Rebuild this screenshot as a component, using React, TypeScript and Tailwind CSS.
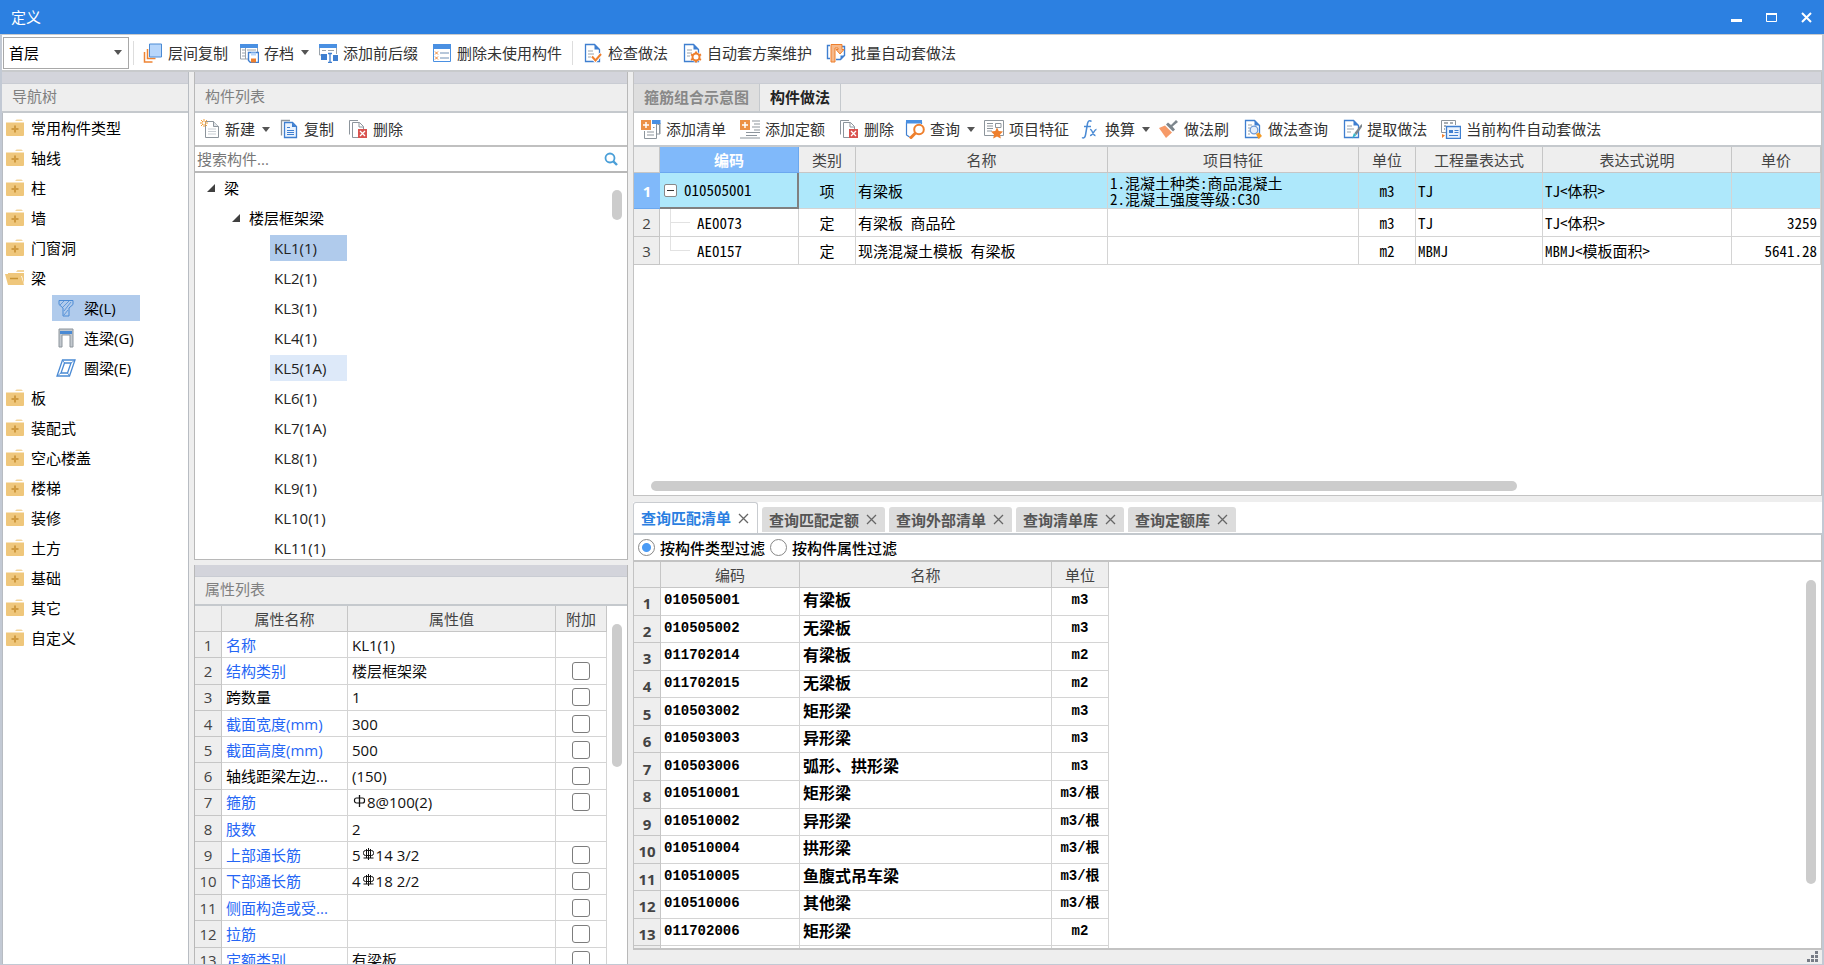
import { ReactNode, useState } from "react";

// Navigation tree schema
const navSchema = [
  { name: "常用构件类型" },
  { name: "轴线" },
  { name: "柱" },
  { name: "墙" },
  { name: "门窗洞" },
  { name: "梁", open: true },
  { name: "板" },
  { name: "装配式" },
  { name: "空心楼盖" },
  { name: "楼梯" },
  { name: "装修" },
  { name: "土方" },
  { name: "基础" },
  { name: "其它" },
  { name: "自定义" },
];

const beamKinds = [
  { name: "梁(L)", icon: <BeamIcon /> },
  { name: "连梁(G)", icon: <LinkBeamIcon /> },
  { name: "圈梁(E)", icon: <RingBeamIcon /> },
];

const components = [
  "KL1(1)",
  "KL2(1)",
  "KL3(1)",
  "KL4(1)",
  "KL5(1A)",
  "KL6(1)",
  "KL7(1A)",
  "KL8(1)",
  "KL9(1)",
  "KL10(1)",
  "KL11(1)",
];

interface Property {
  name: string;
  value: ReactNode;
  blue: boolean;
  extra: boolean;
}

const properties: Property[] = [
  { name: "名称", value: "KL1(1)", blue: true, extra: false },
  { name: "结构类别", value: "楼层框架梁", blue: true, extra: true },
  { name: "跨数量", value: "1", blue: false, extra: true },
  { name: "截面宽度(mm)", value: "300", blue: true, extra: true },
  { name: "截面高度(mm)", value: "500", blue: true, extra: true },
  { name: "轴线距梁左边...", value: "(150)", blue: false, extra: true },
  { name: "箍筋", value: <><Rebar bars={1} />8@100(2)</>, blue: true, extra: true },
  { name: "肢数", value: "2", blue: true, extra: false },
  { name: "上部通长筋", value: <>5<Rebar bars={3} />14 3/2</>, blue: true, extra: true },
  { name: "下部通长筋", value: <>4<Rebar bars={3} />18 2/2</>, blue: true, extra: true },
  { name: "侧面构造或受...", value: "", blue: true, extra: true },
  { name: "拉筋", value: "", blue: true, extra: true },
  { name: "定额类别", value: "有梁板", blue: true, extra: true },
];

const methods = [
  { code: "AE0073", kind: "定", name: "有梁板 商品砼", unit: "m3", expr: "TJ", note: "TJ<体积>", price: "3259" },
  { code: "AE0157", kind: "定", name: "现浇混凝土模板 有梁板", unit: "m2", expr: "MBMJ", note: "MBMJ<模板面积>", price: "5641.28" },
];

const matches = [
  { code: "010505001", name: "有梁板", unit: "m3" },
  { code: "010505002", name: "无梁板", unit: "m3" },
  { code: "011702014", name: "有梁板", unit: "m2" },
  { code: "011702015", name: "无梁板", unit: "m2" },
  { code: "010503002", name: "矩形梁", unit: "m3" },
  { code: "010503003", name: "异形梁", unit: "m3" },
  { code: "010503006", name: "弧形、拱形梁", unit: "m3" },
  { code: "010510001", name: "矩形梁", unit: "m3/根" },
  { code: "010510002", name: "异形梁", unit: "m3/根" },
  { code: "010510004", name: "拱形梁", unit: "m3/根" },
  { code: "010510005", name: "鱼腹式吊车梁", unit: "m3/根" },
  { code: "010510006", name: "其他梁", unit: "m3/根" },
  { code: "011702006", name: "矩形梁", unit: "m2" },
];

const queryTabs = ["查询匹配清单", "查询匹配定额", "查询外部清单", "查询清单库", "查询定额库"];

/* ---------- Icons ---------- */

function Icon({ children }: { children: ReactNode }) {
  return (
    <svg width="20" height="20" viewBox="0 0 20 20" fill="none" className="shrink-0" aria-hidden="true">
      {children}
    </svg>
  );
}

function FolderIcon({ open = false }: { open?: boolean }) {
  return open ? (
    <svg width="20" height="18" viewBox="0 0 20 18" className="-ml-px mr-[-1px] shrink-0" aria-hidden="true">
      <path d="M11 3l1.500-2H19v2z" fill="#f3d59c" />
      <path d="M3 4h16v11l-2-8H3z" fill="#efc77c" />
      <path d="M0 5h15.5L19 16H3z" fill="#efc77c" />
      <path d="M5 9.500h8" stroke="#c99434" strokeWidth="1.500" />
    </svg>
  ) : (
    <svg width="18" height="18" viewBox="0 0 18 18" className="shrink-0" aria-hidden="true">
      <path d="M9 2l1.500-1.500h5L17 2z" fill="#f3d59c" />
      <path d="M0 3.500h18V16a1 1 0 0 1-1 1H1a1 1 0 0 1-1-1z" fill="#efc77c" />
      <path d="M5.500 10h7M9 6.500v7" stroke="#cf9a40" strokeWidth="2" />
    </svg>
  );
}

function BeamIcon() {
  return (
    <svg width="16" height="18" viewBox="0 0 16 18" fill="none" stroke="#4a8ad4" aria-hidden="true">
      <path d="M1 1.500h14v4L11 9v8H5V9L1 5.500z" />
      <path d="M2 6l4-4M5 8l6-6M6 12l7-9M6 16l4-5" strokeWidth=".8" />
    </svg>
  );
}

function LinkBeamIcon() {
  return (
    <svg width="16" height="20" viewBox="0 0 16 20" fill="none" aria-hidden="true">
      <path d="M1 1v18h3V7h8v12h3V1z" fill="#c3c9cf" stroke="#8d959c" />
      <path d="M2 3h12v3H2z" fill="#4a8ad4" />
    </svg>
  );
}

function RingBeamIcon() {
  return (
    <svg width="20" height="18" viewBox="0 0 20 18" fill="none" stroke="#4a8ad4" strokeWidth="1.300" aria-hidden="true">
      <path d="M6.500 1H19l-5.500 16H1z" />
      <path d="M8.500 4h6.500l-3.500 10H5z" />
      <path d="M6.500 1l2 3M15 4l4-3M11.500 14l2 3M5 14l-4 3" strokeWidth=".8" />
    </svg>
  );
}

const LayerCopyIcon = () => (
  <Icon>
    <path d="M1.500 9v10h8M4.500 6v9.500h8" stroke="#ee8434" strokeWidth="1.500" />
    <path d="M6.500 1h12v13h-12z" fill="#b7d6fb" stroke="#4a8ad4" />
  </Icon>
);

const ArchiveIcon = () => (
  <Icon>
    <path d="M1.500 1.500h17v8M1.500 2v14H9" stroke="#9aa3ab" />
    <path d="M1 1h18v4H1z" fill="#4a90e2" />
    <path d="M3 7h3M8 7h9M3 10h3M3 13h3M6.500 5v11" stroke="#9aa3ab" />
    <path d="M9.500 9.500h10v10h-8l-2-2z" fill="#fff" stroke="#3f7fd0" strokeWidth="1.400" />
    <path d="M12 9.500h5v3h-5z" fill="#b7d6fb" />
    <path d="M12 15.500h5v4h-5z" fill="#ee7f2d" />
  </Icon>
);

const AffixIcon = () => (
  <Icon>
    <path d="M1.500 2v10H6M18.500 2v9" stroke="#9aa3ab" />
    <path d="M1 1h18v4H1z" fill="#4a90e2" />
    <path d="M4 7.500h4M10 7.500h6" stroke="#9aa3ab" />
    <path d="M3 11h6v6H3zM15 12h5v6h-5z" fill="#3f7fd0" />
    <path d="M10 10.500h4M12 10.500v9M10 19.500h4" stroke="#3f7fd0" strokeWidth="1.300" />
  </Icon>
);

const UnusedIcon = () => (
  <Icon>
    <path d="M1.500 2v16.500h17V2" stroke="#4a90e2" />
    <path d="M1 1h18v5H1z" fill="#4a90e2" />
    <path d="M3 8.500l3 3M6 8.500l-3 3M3 13.500l3 3M6 13.500l-3 3" stroke="#ee8434" />
    <path d="M8 10h9M8 15h9" stroke="#6e8fb5" />
  </Icon>
);

const Sheet = () => (
  <>
    <path d="M2.500 1.500h9l5 5v12h-14z" fill="#fff" stroke="#3f7fd0" strokeWidth="1.300" />
    <path d="M11.500 1l5.500 5.500h-5.500z" fill="#3f7fd0" />
  </>
);

const CheckIcon = () => (
  <Icon>
    <Sheet />
    <path d="M5 8h5M5 11h6M5 14h3" stroke="#9aa3ab" />
    <path d="M9 13.500l3.500 4L18 11" stroke="#fff" strokeWidth="4" />
    <path d="M9 13.500l3.500 4L18 11" stroke="#ee7f2d" strokeWidth="2" />
  </Icon>
);

const PlanIcon = () => (
  <Icon>
    <Sheet />
    <path d="M5 7h5M5 10h5M5 13h3" stroke="#9aa3ab" />
    <circle cx="14" cy="14" r="5" fill="#fff" />
    <circle cx="14" cy="14" r="3.500" stroke="#ee7f2d" strokeWidth="2" />
    <path d="M14 8.500v2M14 17.500v2M9 11.300l1.800 1M17.200 15.800l1.800 1M9 16.800l1.800-1M17.200 12.300l1.800-1" stroke="#ee7f2d" strokeWidth="2" />
  </Icon>
);

const BatchIcon = () => (
  <Icon>
    <path d="M4 2.500H1.500v13H4M13 3.500h5.500v9l-4 4H10" stroke="#3f7fd0" strokeWidth="1.400" />
    <path d="M18.500 12.500h-4v4z" fill="#3f7fd0" />
    <path d="M5 1.500h11v5h2l-4 4.500-4-4.500h2V5H9v14H5z" fill="#f6b98a" stroke="#ee7f2d" />
  </Icon>
);

const NewIcon = () => (
  <Icon>
    <path d="M5.500 2.500h8l5 5v11h-13z" fill="#fff" stroke="#8d959c" />
    <path d="M13.500 2.500v5h5" fill="#dfe3e7" stroke="#8d959c" />
    <path d="M8 10h8M8 12.500h8M8 15h8" stroke="#c9ced3" />
    <path d="M1 1l6 6M7 1L1 7M4 0v8M0 4h8" stroke="#f5a13a" />
    <circle cx="4" cy="4" r="1.200" fill="#fff" />
  </Icon>
);

const CopyIcon = () => (
  <Icon>
    <path d="M11 1.500H2.500v15" stroke="#8d959c" strokeWidth="1.300" />
    <path d="M5.500 3.500h8l4 4v11h-12z" fill="#eaf3fe" stroke="#3f7fd0" strokeWidth="1.300" />
    <path d="M13 3.500v4.500h4.500z" fill="#3f7fd0" />
    <path d="M8 8.500h3M8 11.500h7M8 13.500h7M8 15.500h7" stroke="#3f7fd0" />
  </Icon>
);

const DeleteIcon = () => (
  <Icon>
    <path d="M10 1.500H1.500v14" stroke="#8d959c" />
    <path d="M4.500 3.500h7l4 4v11h-11z" fill="#fff" stroke="#8d959c" />
    <path d="M11 3.500v4.500h4.500" stroke="#8d959c" />
    <path d="M10 10h9v9h-9z" fill="#d9534f" />
    <path d="M12 12l5 5M17 12l-5 5" stroke="#fff" strokeWidth="1.300" />
  </Icon>
);

const PlusBadge = () => (
  <>
    <path d="M0 1h10v10H0z" fill="#ec9146" />
    <path d="M5 3v6M2 6h6" stroke="#fff" strokeWidth="1.500" />
  </>
);

const AddListIcon = () => (
  <Icon>
    <path d="M19 4v11h-3M3.500 12v7.500h12V5" stroke="#8d959c" />
    <path d="M11 1h8.500v4H11z" fill="#4a90e2" />
    <path d="M12 8.500h1.500M6 13h7M6 16h7M16.500 5.500h2v9" stroke="#8d959c" />
    <PlusBadge />
  </Icon>
);

const AddQuotaIcon = () => (
  <Icon>
    <path d="M12 2h8M14 5h6M12 8h8M14 11h6M6 13.500h14M6 16.500h11M0 19h20" stroke="#8d959c" strokeWidth="1.200" />
    <PlusBadge />
  </Icon>
);

const QueryIcon = () => (
  <Icon>
    <path d="M1.500 3v13l3 2M16.500 3v2" stroke="#3f7fd0" strokeWidth="1.200" />
    <path d="M1 1h16v3.500H1z" fill="#4a90e2" />
    <circle cx="14" cy="10.500" r="4.800" fill="#fff" stroke="#ee7f2d" strokeWidth="2" />
    <path d="M10.500 14L5 19.500" stroke="#ee7f2d" strokeWidth="3" />
  </Icon>
);

const FeatureIcon = () => (
  <Icon>
    <path d="M.5 1.500h19v15H.5z" fill="#fff" stroke="#8d959c" />
    <path d="M3 4.500h6M3 7h6M3 9.500h6M3 12h5M11.500 4.500h5.500v4h-5.500z" stroke="#8d959c" />
    <path d="M13 8.500l1.700 3.500 4.300.6-3 2.900.8 4-3.800-2-3.800 2 .8-4-3-2.900 4.300-.6z" fill="#ee7f2d" />
  </Icon>
);

const FxIcon = () => (
  <Icon>
    <path d="M11.500 2.500c-1.800-1.800-3.500-.5-4 2L5.500 16c-.5 2.800-2 3.500-3.500 2.500M4 7.500h7" stroke="#4a8ad4" strokeWidth="1.500" />
    <path d="M10 10.500c2.500-1 2.500 6.500 5.500 6M16.500 10.500c-2-.5-4 6.500-6.500 6" stroke="#4a8ad4" strokeWidth="1.400" />
  </Icon>
);

const BrushIcon = () => (
  <Icon>
    <path d="M0 9l6-2.500 7 7L7 19z" fill="#f69a68" />
    <path d="M7 5.500l7 7 2-2-2.500-3L19 3l-2-2-5 5-3-2.500z" fill="#7d868d" />
  </Icon>
);

const MethodQueryIcon = () => (
  <Icon>
    <Sheet />
    <path d="M5 6h4M5 9h2M5 12h2M5 15h2" stroke="#9aa3ab" />
    <circle cx="11" cy="11" r="3.800" fill="#e4eefb" stroke="#6e9bd6" strokeWidth="1.300" />
    <path d="M13 15l3-1.500 3 3.500-3.500 3z" fill="#f59a23" />
  </Icon>
);

const ExtractIcon = () => (
  <Icon>
    <Sheet />
    <path d="M5 7h5M5 10h7M5 13h4" stroke="#9aa3ab" />
    <path d="M19.500 5l-7 9 2 2 6-9z" fill="#7d868d" />
    <path d="M12 14l2.500 2-4.500 3.500z" fill="#35b6c9" />
  </Icon>
);

const AutoIcon = () => (
  <Icon>
    <path d="M5 13.500H.5v-12h14V6" stroke="#8d959c" />
    <path d="M3 4h4M9 4h3M3 7h2M3 10h1" stroke="#8d959c" strokeWidth="1.500" />
    <path d="M5.500 7.500h14v12h-14z" fill="#eaf3fe" stroke="#3f7fd0" strokeWidth="1.300" />
    <path d="M8 11h4v3H8z" fill="#3f7fd0" />
    <path d="M13.500 11.500h4M13.500 13.500h4M8 16.500h9" stroke="#3f7fd0" />
    <path d="M1 15l3 1.500-3 2.500z" fill="#ee7f2d" />
  </Icon>
);

// Steel grade mark drawn ahead of a bar diameter
function Rebar({ bars }: { bars: number }) {
  return (
    <svg width="15" height="12" viewBox="0 0 15 12" fill="none" stroke="#111" className="mb-[6px] inline-block" role="img" aria-label="钢筋">
      {bars === 1 ? (
        <>
          <rect x="2.500" y="3" width="10" height="5" rx="2" strokeWidth="1.200" />
          <path d="M7.500 0v12" strokeWidth="1.300" />
        </>
      ) : (
        <>
          <rect x="2.500" y="2.500" width="10" height="5" rx="2" />
          <path d="M7.500 0v12M5.500 1v9M9.500 1v9M2.500 10h10" />
        </>
      )}
    </svg>
  );
}

/* ---------- Shared pieces ---------- */

function Caret() {
  return (
    <svg width="8" height="5" viewBox="0 0 8 5" className="ml-0.5 shrink-0" aria-hidden="true">
      <path d="M0 0h8L4 5z" fill="#555" />
    </svg>
  );
}

interface ToolButtonProps {
  icon: ReactNode;
  label: string;
  menu?: boolean;
}

function ToolButton({ icon, label, menu = false }: ToolButtonProps) {
  return (
    <button
      type="button"
      className={`flex h-[26px] shrink-0 items-center gap-[5px] rounded-sm whitespace-nowrap text-[#333] hover:bg-[#e8f1fc] ${
        menu ? "pl-0.5" : "px-[5px]"
      }`}
    >
      {icon}
      <span>{label}</span>
      {menu && <Caret />}
    </button>
  );
}

function PanelTitle({ title }: { title: string }) {
  return (
    <div className="shrink-0">
      <div className="h-[12px] border-b border-[#c9ccd3] bg-[#d3d4db]" />
      <h2 className="h-[29px] border-b-2 border-[#c5c9cd] bg-[#eee] pl-[10px] leading-[25px] text-[#808080]">{title}</h2>
    </div>
  );
}

function ExpandArrow() {
  return (
    <svg width="8" height="8" viewBox="0 0 8 8" className="shrink-0" aria-hidden="true">
      <path d="M8 0v8H0z" fill="#404040" />
    </svg>
  );
}

const headCell = "border-r border-b border-[#c6c6c6] bg-[#eee] font-normal text-[#444]";
const bodyCell = "border-r border-b border-[#d4d4d4]";
const song = "font-['Noto_Sans_Mono_CJK_SC','Noto_Sans_CJK_SC',monospace]";

/* ---------- Panels ---------- */

function NavPanel() {
  return (
    <nav className="flex w-[187px] shrink-0 flex-col border-r border-[#b8bcc2] bg-white">
      <PanelTitle title="导航树" />
      <ul className="flex-1 overflow-hidden border-l border-[#b8bcc2] text-black">
        {navSchema.map((item) => (
          <li key={item.name}>
            <div className="flex h-[30px] items-center gap-[7px] pl-[3px]">
              <FolderIcon open={item.open} />
              <span>{item.name}</span>
            </div>
            {item.open && (
              <ul>
                {beamKinds.map((kind, i) => (
                  <li key={kind.name} className="flex h-[30px] items-center pl-[49px]">
                    <div className={`flex h-[26px] w-[88px] items-center gap-[7px] pl-[3px] ${i === 0 ? "bg-[#b0cbec]" : ""}`}>
                      <span className="flex w-[22px] justify-center">{kind.icon}</span>
                      <span>{kind.name}</span>
                    </div>
                  </li>
                ))}
              </ul>
            )}
          </li>
        ))}
      </ul>
    </nav>
  );
}

function ComponentPanel() {
  const [active, setActive] = useState<string>("KL1(1)");

  return (
    <section className="flex h-[488px] shrink-0 flex-col border-x border-b border-[#b8b8b8] bg-white">
      <PanelTitle title="构件列表" />
      <div className="flex h-[34px] shrink-0 items-center gap-1 border-b-2 border-[#c0c0c0] pl-[3px]">
        <ToolButton icon={<NewIcon />} label="新建" menu />
        <ToolButton icon={<CopyIcon />} label="复制" />
        <ToolButton icon={<DeleteIcon />} label="删除" />
      </div>
      <div className="flex h-[26px] shrink-0 items-center border-b-2 border-[#b8b8b8] pr-[9px] pl-0.5">
        <input
          type="text"
          aria-label="搜索构件"
          placeholder="搜索构件..."
          className="min-w-0 flex-1 outline-none placeholder:text-[#777]"
        />
        <svg width="14" height="14" viewBox="0 0 14 14" fill="none" stroke="#4a9fd8" aria-hidden="true">
          <circle cx="6" cy="6" r="4.500" strokeWidth="1.800" />
          <path d="M9 9l4 4" strokeWidth="2.400" />
        </svg>
      </div>
      <div className="flex min-h-0 flex-1 text-[#222]">
        <div className="flex-1 overflow-hidden">
          <div className="flex h-[30px] items-center gap-[9px] pl-[12px] text-black">
            <ExpandArrow />
            梁
          </div>
          <div className="flex h-[30px] items-center gap-[9px] pl-[37px] text-black">
            <ExpandArrow />
            楼层框架梁
          </div>
          <ul>
            {components.map((name) => (
              <li key={name} className="flex h-[30px] items-center pl-[75px]">
                <button
                  type="button"
                  onClick={() => setActive(name)}
                  className={`h-[26px] w-[77px] pl-1 text-left ${
                    active === name ? "bg-[#b0cbec]" : name === "KL5(1A)" ? "bg-[#dde9f9]" : ""
                  }`}
                >
                  {name}
                </button>
              </li>
            ))}
          </ul>
        </div>
        <div className="w-[15px] pt-[17px]">
          <div className="h-[30px] w-[10px] rounded-full bg-[#ccc]" />
        </div>
      </div>
    </section>
  );
}

function PropertyPanel() {
  return (
    <section className="flex min-h-0 flex-1 flex-col border-x border-[#b8b8b8] bg-white">
      <PanelTitle title="属性列表" />
      <div className="flex min-h-0 flex-1 overflow-hidden">
        <div className="min-w-0 flex-1">
          <table className="h-[368px] w-full table-fixed border-separate border-spacing-0">
            <colgroup>
              <col className="w-[27px]" />
              <col className="w-[126px]" />
              <col />
              <col className="w-[51px]" />
            </colgroup>
            <thead>
              <tr className="h-[26px]">
                <th className={headCell} />
                <th className={headCell}>属性名称</th>
                <th className={headCell}>属性值</th>
                <th className={headCell}>附加</th>
              </tr>
            </thead>
            <tbody>
              {properties.map((prop, i) => (
                <tr key={prop.name} className="h-[26px] leading-[24px]">
                  <td className={`${headCell} text-center`}>{i + 1}</td>
                  <td className={`${bodyCell} pl-1 whitespace-nowrap ${prop.blue ? "text-[#2566f5]" : "text-black"}`}>{prop.name}</td>
                  <td className={`${bodyCell} pl-1 text-[#111]`}>{prop.value}</td>
                  <td className={bodyCell}>
                    {prop.extra && (
                      <input
                        type="checkbox"
                        aria-label={`${prop.name} 附加`}
                        className="mx-auto block size-[18px] appearance-none rounded-[3px] border border-[#7d7d7d] bg-white checked:bg-[#4a90e2]"
                      />
                    )}
                  </td>
                </tr>
              ))}
            </tbody>
          </table>
        </div>
        <div className="w-[20px] shrink-0 pt-[18px] pl-[5px]">
          <div className="h-[143px] w-[10px] rounded-full bg-[#ccc]" />
        </div>
      </div>
    </section>
  );
}

function MethodTable() {
  return (
    <table className="w-full table-fixed border-separate border-spacing-0 text-black">
      <colgroup>
        <col className="w-[26px]" />
        <col className="w-[139px]" />
        <col className="w-[57px]" />
        <col className="w-[252px]" />
        <col className="w-[251px]" />
        <col className="w-[57px]" />
        <col className="w-[127px]" />
        <col className="w-[189px]" />
        <col />
      </colgroup>
      <thead>
        <tr className="h-[26px]">
          <th className={headCell} />
          <th className="border-r border-b border-[#6ba8ef] bg-[#80b9fa] font-bold text-white">编码</th>
          <th className={headCell}>类别</th>
          <th className={headCell}>名称</th>
          <th className={headCell}>项目特征</th>
          <th className={headCell}>单位</th>
          <th className={headCell}>工程量表达式</th>
          <th className={headCell}>表达式说明</th>
          <th className={headCell}>单价</th>
        </tr>
      </thead>
      <tbody className={song}>
        <tr className="h-[36px] bg-[#aee8fb]">
          <td className="border-b border-[#6ba8ef] bg-[#80b9fa] text-center font-['Open_Sans',sans-serif] font-bold text-white">1</td>
          <td className="border-r-2 border-b-2 border-[#808080] pl-1">
            <span className="flex items-center gap-[7px]">
              <button type="button" aria-label="折叠" className="flex size-[13px] items-center justify-center rounded-[2px] border border-[#888] bg-white">
                <span className="h-px w-[7px] bg-[#333]" />
              </button>
              010505001
            </span>
          </td>
          <td className={`${bodyCell} text-center`}>项</td>
          <td className={`${bodyCell} pl-0.5`}>有梁板</td>
          <td className={`${bodyCell} pl-0.5 leading-4`}>
            1.混凝土种类:商品混凝土
            <br />
            2.混凝土强度等级:C30
          </td>
          <td className={`${bodyCell} text-center`}>m3</td>
          <td className={`${bodyCell} pl-0.5`}>TJ</td>
          <td className={`${bodyCell} pl-0.5`}>{"TJ<体积>"}</td>
          <td className={bodyCell} />
        </tr>
        {methods.map((row, i) => (
          <tr key={row.code} className="leading-[20px]">
            <td className={`${headCell} text-center font-['Open_Sans',sans-serif]`}>{i + 2}</td>
            <td className={bodyCell}>
              <span className="flex h-[27px] items-center pl-[10px]">
                <span className="flex h-full w-[20px] flex-col">
                  <span className="flex-1 border-b border-l border-[#e2e2e2]" />
                  <span className={`flex-1 ${i === 0 ? "border-l border-[#e2e2e2]" : ""}`} />
                </span>
                <span className="pl-[7px]">{row.code}</span>
              </span>
            </td>
            <td className={`${bodyCell} text-center`}>{row.kind}</td>
            <td className={`${bodyCell} pl-0.5`}>{row.name}</td>
            <td className={bodyCell} />
            <td className={`${bodyCell} text-center`}>{row.unit}</td>
            <td className={`${bodyCell} pl-0.5`}>{row.expr}</td>
            <td className={`${bodyCell} pl-0.5`}>{row.note}</td>
            <td className={`${bodyCell} pr-[3px] text-right`}>{row.price}</td>
          </tr>
        ))}
      </tbody>
    </table>
  );
}

function MatchTable() {
  return (
    <table className="h-[412px] w-[475px] table-fixed border-separate border-spacing-0 font-bold text-black">
      <colgroup>
        <col className="w-[27px]" />
        <col className="w-[139px]" />
        <col className="w-[252px]" />
        <col className="w-[57px]" />
      </colgroup>
      <thead>
        <tr className="h-[26px]">
          <th className={headCell} />
          <th className={headCell}>编码</th>
          <th className={headCell}>名称</th>
          <th className={headCell}>单位</th>
        </tr>
      </thead>
      <tbody>
        {matches.map((row, i) => (
          <tr key={row.code} className="h-[27px] leading-[22px]">
            <td className="border-r border-b border-[#c6c6c6] bg-[#eee] pt-1 text-center text-[#444]">{i + 1}</td>
            <td className={`${bodyCell} pb-0.5 pl-[3px] font-['Liberation_Mono',monospace] text-sm`}>{row.code}</td>
            <td className={`${bodyCell} pb-0.5 pl-[3px] text-base leading-[22px]`}>{row.name}</td>
            <td className={`${bodyCell} pb-0.5 text-center font-['Liberation_Mono','Noto_Sans_CJK_SC',monospace] text-sm`}>{row.unit}</td>
          </tr>
        ))}
        <tr className="h-[27px]">
          <td className={headCell} />
          <td className={bodyCell} />
          <td className={bodyCell} />
          <td className={bodyCell} />
        </tr>
      </tbody>
    </table>
  );
}

function QueryPanel() {
  const [tab, setTab] = useState<string>(queryTabs[0]);
  const [filter, setFilter] = useState<string>("type");

  return (
    <section className="flex min-h-0 flex-1 flex-col">
      {/* Query tabs */}
      <div className="flex h-[33px] shrink-0 items-end gap-1 border-b-2 border-[#c3c8cd] bg-white font-bold">
        {queryTabs.map((name) => (
          <div
            key={name}
            className={`flex items-center gap-[7px] rounded-t-[3px] pr-[8px] pl-[7px] ${
              tab === name
                ? "h-[31px] border-x border-t border-[#c9ccd0] bg-white text-[#2b7fe1]"
                : "mb-px h-[25px] bg-[#dcdcdc] text-[#555]"
            }`}
          >
            <button type="button" onClick={() => setTab(name)}>
              {name}
            </button>
            <button type="button" aria-label={`关闭${name}`}>
              <svg width="11" height="11" viewBox="0 0 11 11" stroke="#666" strokeWidth="1.300" aria-hidden="true">
                <path d="M1 1l9 9M10 1l-9 9" />
              </svg>
            </button>
          </div>
        ))}
      </div>

      {/* Filter options */}
      <div className="flex h-[27px] shrink-0 items-center gap-[5px] border-x border-b-2 border-[#c3c3c3] bg-white pl-1 font-medium text-black">
        {[
          { id: "type", label: "按构件类型过滤" },
          { id: "prop", label: "按构件属性过滤" },
        ].map((option) => (
          <label key={option.id} className="flex items-center gap-[5px]">
            <input
              type="radio"
              name="filter"
              checked={filter === option.id}
              onChange={() => setFilter(option.id)}
              className="size-[17px] appearance-none rounded-full border border-[#888] bg-white bg-[radial-gradient(circle,#4a9bf5_4px,transparent_5px)] not-checked:bg-none"
            />
            {option.label}
          </label>
        ))}
      </div>

      {/* Matched list */}
      <div className="flex min-h-0 flex-1 justify-between overflow-hidden border-x border-b-2 border-[#c3c3c3] bg-white">
        <MatchTable />
        <div className="w-[15px] pt-[18px]">
          <div className="h-[304px] w-[10px] rounded-full bg-[#ccc]" />
        </div>
      </div>

      {/* Status bar with size grip */}
      <div className="flex h-[14px] shrink-0 items-end justify-end bg-[#eee] pr-1 pb-0.5">
        <svg width="11" height="11" viewBox="0 0 11 11" fill="#777c86" aria-hidden="true">
          <path d="M8 0h3v3H8zM4 4h3v3H4zM8 4h3v3H8zM0 8h3v3H0zM4 8h3v3H4zM8 8h3v3H8z" />
        </svg>
      </div>
    </section>
  );
}

const App: React.FC = () => {
  return (
    <div className="flex h-screen flex-col overflow-hidden bg-[#eee] font-['Open_Sans','Noto_Sans_CJK_SC',sans-serif] text-[15px] leading-[22px]">
      {/* Title bar */}
      <header className="flex h-[34px] shrink-0 items-center justify-between bg-[#2c80e1] pl-[11px] text-white">
        <h1>定义</h1>
        <div className="flex h-full">
          <button type="button" aria-label="最小化" className="flex w-[35px] items-center justify-center">
            <svg width="11" height="11" viewBox="0 0 11 11" fill="#fff" aria-hidden="true">
              <path d="M0 7h11v3H0z" />
            </svg>
          </button>
          <button type="button" aria-label="最大化" className="flex w-[35px] items-center justify-center">
            <svg width="11" height="11" viewBox="0 0 11 11" fill="none" stroke="#fff" aria-hidden="true">
              <path d="M.5 1.500h10v8H.5z" />
              <path d="M0 2h11" strokeWidth="2" />
            </svg>
          </button>
          <button type="button" aria-label="关闭" className="flex w-[35px] items-center justify-center">
            <svg width="11" height="11" viewBox="0 0 11 11" stroke="#fff" strokeWidth="2" aria-hidden="true">
              <path d="M1 1l9 9M10 1l-9 9" />
            </svg>
          </button>
        </div>
      </header>

      <div className="flex min-h-0 flex-1 flex-col border-x-2 border-b border-[#c2c9d4]">
        {/* Main toolbar */}
        <div className="flex h-[38px] shrink-0 items-center gap-1 border-t border-b-2 border-[#c8cacc] bg-white pl-px">
          <div className="relative h-[32px] w-[126px]">
            <select aria-label="楼层" className="size-full appearance-none border border-[#a8a8a8] bg-white pl-[5px] text-black">
              <option>首层</option>
            </select>
            <span className="pointer-events-none absolute top-[13px] right-[7px]">
              <Caret />
            </span>
          </div>
          <span className="h-[24px] w-px bg-[#ddd]" />
          <ToolButton icon={<LayerCopyIcon />} label="层间复制" />
          <ToolButton icon={<ArchiveIcon />} label="存档" menu />
          <ToolButton icon={<AffixIcon />} label="添加前后缀" />
          <ToolButton icon={<UnusedIcon />} label="删除未使用构件" />
          <span className="mx-px h-[24px] w-px bg-[#ddd]" />
          <ToolButton icon={<CheckIcon />} label="检查做法" />
          <ToolButton icon={<PlanIcon />} label="自动套方案维护" />
          <ToolButton icon={<BatchIcon />} label="批量自动套做法" />
        </div>

        <main className="flex min-h-0 flex-1 gap-[5px]">
          <NavPanel />

          <div className="flex w-[434px] shrink-0 flex-col gap-[5px]">
            <ComponentPanel />
            <PropertyPanel />
          </div>

          <div className="flex min-w-0 flex-1 flex-col gap-[6px]">
            <section className="flex h-[424px] shrink-0 flex-col border-x border-b border-[#c3c3c3] bg-white">
              <div className="h-[12px] shrink-0 border-b border-[#c9ccd3] bg-[#d3d4db]" />
              <div className="flex h-[29px] shrink-0 border-b-2 border-[#c5c9cd] bg-[#eee] font-bold">
                <button type="button" className="border-r border-[#c5c9cd] bg-[#dedede] px-[10px] pb-0.5 text-[#888]">
                  箍筋组合示意图
                </button>
                <button type="button" className="border-r border-[#c5c9cd] px-[10px] pb-0.5 text-[#222]">
                  构件做法
                </button>
              </div>
              <div className="flex h-[34px] shrink-0 items-center gap-1 border-b-2 border-[#c5c9cd] pl-0.5">
                <ToolButton icon={<AddListIcon />} label="添加清单" />
                <ToolButton icon={<AddQuotaIcon />} label="添加定额" />
                <ToolButton icon={<DeleteIcon />} label="删除" />
                <ToolButton icon={<QueryIcon />} label="查询" menu />
                <ToolButton icon={<FeatureIcon />} label="项目特征" />
                <ToolButton icon={<FxIcon />} label="换算" menu />
                <ToolButton icon={<BrushIcon />} label="做法刷" />
                <ToolButton icon={<MethodQueryIcon />} label="做法查询" />
                <ToolButton icon={<ExtractIcon />} label="提取做法" />
                <ToolButton icon={<AutoIcon />} label="当前构件自动套做法" />
              </div>
              <div className="flex-1 overflow-hidden">
                <MethodTable />
              </div>
              <div className="h-[14px] shrink-0 pl-[17px]">
                <div className="h-[10px] w-[74%] rounded-full bg-[#ccc]" />
              </div>
            </section>
            <QueryPanel />
          </div>
        </main>
      </div>
    </div>
  );
};

export default App;
